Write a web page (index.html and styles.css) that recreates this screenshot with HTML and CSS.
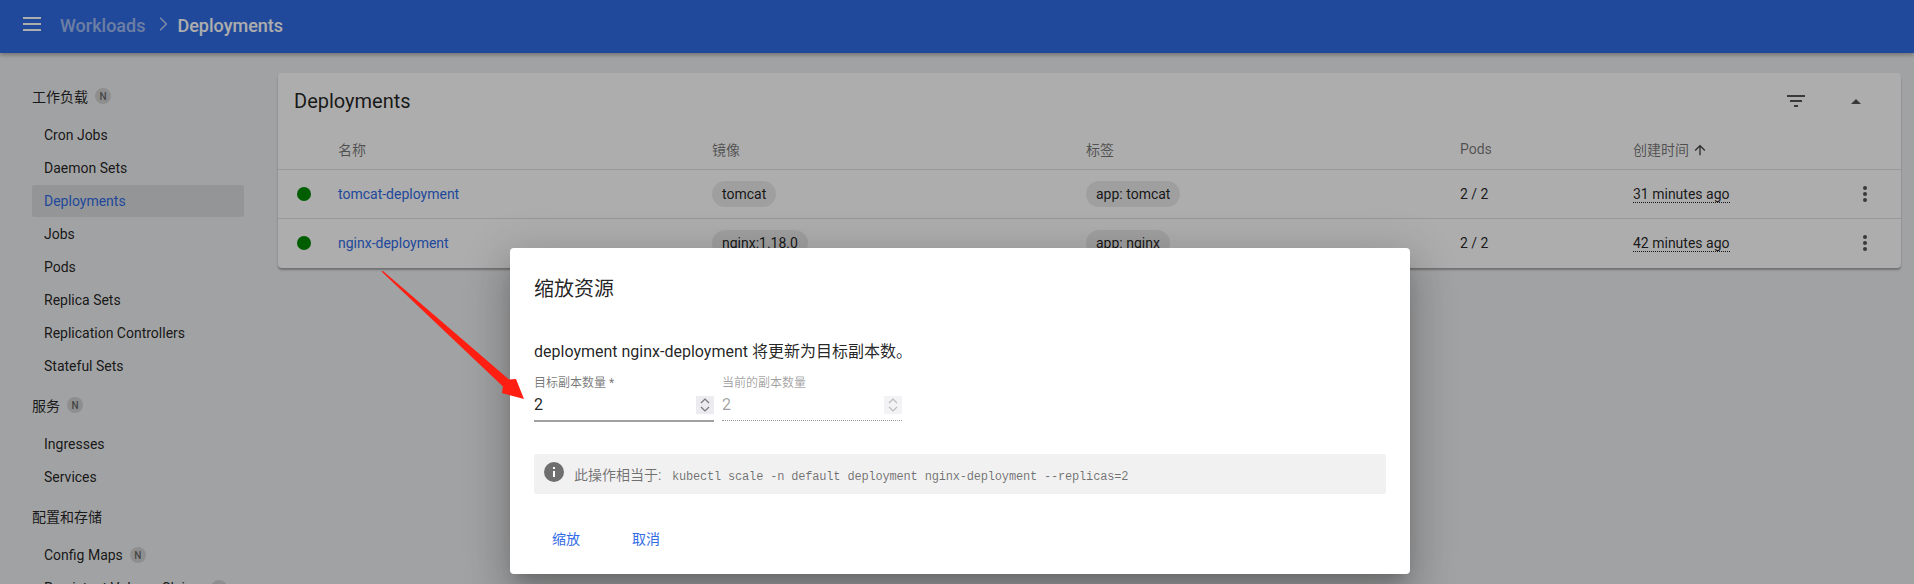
FILE: index.html
```html
<!DOCTYPE html>
<html lang="en">
<head>
    <meta charset="UTF-8">
    <title>Deployments</title>
    <link rel="stylesheet" href="styles.css">
</head>
<body>
    <header class="toolbar">
        <svg class="menu-icon" viewBox="0 0 18 14"><path d="M0 0h18v2H0zM0 6h18v2H0zM0 12h18v2H0z"/></svg>
        <span class="crumb">Workloads</span>
        <svg class="crumb-sep" viewBox="0 0 24 24"><path d="M8.6 3.4 10 2l10 10-10 10-1.4-1.4L17.2 12z"/></svg>
        <span class="crumb current">Deployments</span>
    </header>

    <div class="layout">
        <nav class="sidebar">
            <div class="nav-title">工作负载 <span class="badge">N</span></div>
            <a class="nav-item">Cron Jobs</a>
            <a class="nav-item">Daemon Sets</a>
            <a class="nav-item active">Deployments</a>
            <a class="nav-item">Jobs</a>
            <a class="nav-item">Pods</a>
            <a class="nav-item">Replica Sets</a>
            <a class="nav-item">Replication Controllers</a>
            <a class="nav-item">Stateful Sets</a>
            <div class="nav-title">服务 <span class="badge">N</span></div>
            <a class="nav-item">Ingresses</a>
            <a class="nav-item">Services</a>
            <div class="nav-title">配置和存储</div>
            <a class="nav-item">Config Maps <span class="badge">N</span></a>
            <a class="nav-item">Persistent Volume Claims <span class="badge">N</span></a>
        </nav>

        <main class="main">
            <section class="card">
                <div class="card-head">
                    <h2>Deployments</h2>
                    <svg class="filter-icon" viewBox="0 0 18 12"><path d="M0 0h18v2H0zM3 5h12v2H3zM7 10h4v2H7z"/></svg>
                    <svg class="collapse-icon" viewBox="0 0 10 5"><path d="M0 5 5 0l5 5z"/></svg>
                </div>
                <div class="row head">
                    <span></span>
                    <span>名称</span>
                    <span>镜像</span>
                    <span>标签</span>
                    <span>Pods</span>
                    <span>创建时间 <svg class="sort-icon" viewBox="0 0 24 24"><path d="M4 12l1.41 1.41L11 7.83V20h2V7.83l5.58 5.59L20 12l-8-8z"/></svg></span>
                    <span></span>
                </div>
                <div class="row">
                    <span class="dot"></span>
                    <a class="link">tomcat-deployment</a>
                    <span><span class="chip">tomcat</span></span>
                    <span><span class="chip">app: tomcat</span></span>
                    <span>2 / 2</span>
                    <span><span class="age">31 minutes ago</span></span>
                    <svg class="more-icon" viewBox="0 0 4 16"><circle cx="2" cy="2" r="2"/><circle cx="2" cy="8" r="2"/><circle cx="2" cy="14" r="2"/></svg>
                </div>
                <div class="row">
                    <span class="dot"></span>
                    <a class="link">nginx-deployment</a>
                    <span><span class="chip">nginx:1.18.0</span></span>
                    <span><span class="chip">app: nginx</span></span>
                    <span>2 / 2</span>
                    <span><span class="age">42 minutes ago</span></span>
                    <svg class="more-icon" viewBox="0 0 4 16"><circle cx="2" cy="2" r="2"/><circle cx="2" cy="8" r="2"/><circle cx="2" cy="14" r="2"/></svg>
                </div>
            </section>
        </main>
    </div>

    <div class="backdrop"></div>

    <div class="dialog">
        <h3>缩放资源</h3>
        <p class="dialog-text">deployment nginx-deployment 将更新为目标副本数。</p>
        <div class="fields">
            <div class="field">
                <label>目标副本数量 *</label>
                <div class="field-value">
                    <span>2</span>
                    <span class="spin"><svg viewBox="0 0 10 16"><path d="M1 6l4-4 4 4M1 10l4 4 4-4"/></svg></span>
                </div>
            </div>
            <div class="field disabled">
                <label>当前的副本数量</label>
                <div class="field-value">
                    <span>2</span>
                    <span class="spin"><svg viewBox="0 0 10 16"><path d="M1 6l4-4 4 4M1 10l4 4 4-4"/></svg></span>
                </div>
            </div>
        </div>
        <div class="info">
            <svg class="info-icon" viewBox="0 0 20 20"><circle cx="10" cy="10" r="10"/><path class="info-mark" d="M9 9h2v6H9zM9 5h2v2H9z"/></svg>
            <span>此操作相当于: <code>kubectl scale -n default deployment nginx-deployment --replicas=2</code></span>
        </div>
        <div class="actions">
            <a class="action">缩放</a>
            <a class="action">取消</a>
        </div>
    </div>

    <svg class="arrow" viewBox="0 0 1914 584"><polygon points="381.5,271.5 383,271 509,379.6 516,379 524,399 502,393 503,386.4"/></svg>
</body>
</html>
```

FILE: styles.css
```css
* { box-sizing: border-box; }
html, body { height: 584px; overflow: hidden; }
body { margin: 0; font-family: Roboto, "Noto Sans CJK SC", sans-serif; font-size: 14px; color: rgba(0, 0, 0, .87); background-color: #eeeff1; }

.toolbar { height: 53px; display: flex; align-items: center; padding: 0 0 2px 23px; background-color: #326ce5; color: white; box-shadow: 0 2px 4px rgba(0, 0, 0, .3); }
.menu-icon { width: 18px; height: 14px; fill: white; margin: 0 19px 3px 0; }
.crumb { font-size: 18px; font-weight: 500; color: rgba(255, 255, 255, .55); }
.crumb.current { color: white; }
.crumb-sep { width: 16px; height: 16px; margin: 0 7px 4px 9px; fill: rgba(255, 255, 255, .7); }

.layout { display: flex; }
.sidebar { width: 278px; flex: none; padding: 27px 34px 0 32px; }
.nav-title { height: 32px; margin: 0 0 7px; display: flex; align-items: center; gap: 7px; }
.nav-item { height: 32px; margin-bottom: 1px; padding-left: 12px; display: flex; align-items: center; gap: 7px; border-radius: 2px; }
.nav-item + .nav-title { margin-top: 7px; }
.nav-item.active { background-color: rgba(0, 0, 0, .08); color: #326ce5; }
.badge { width: 16px; height: 16px; border-radius: 50%; display: flex; align-items: center; justify-content: center; font-size: 10px; font-weight: 500; background-color: rgba(0, 0, 0, .12); color: rgba(0, 0, 0, .54); }

.main { flex: 1; padding: 20px 13px 0 0; }
.card { padding-bottom: 1px; background: white; border-radius: 4px; box-shadow: 0 2px 2px rgba(0, 0, 0, .3); }
.card-head { height: 56px; display: flex; align-items: center; padding-left: 16px; }
.card-head h2 { margin: 0 auto 0 0; font-size: 20px; font-weight: 400; }
.filter-icon { width: 18px; height: 12px; fill: #555; margin-right: 46px; }
.collapse-icon { width: 10px; height: 5px; fill: #555; margin-right: 40px; }

.row { display: grid; grid-template-columns: 60px 374px 374px 374px 173px 232px 1fr; align-items: center; height: 49px; border-top: 1px solid rgba(0, 0, 0, .12); }
.row.head { height: 40px; border-top: none; color: rgba(0, 0, 0, .54); font-size: 14px; }
.dot { width: 14px; height: 14px; margin-left: 19px; border-radius: 50%; background-color: #008a00; }
.link { color: #326ce5; }
.chip { display: inline-block; height: 26px; line-height: 26px; padding: 0 10px; border-radius: 13px; background-color: rgba(0, 0, 0, .08); }
.age { border-bottom: 1px dotted rgba(0, 0, 0, .87); }
.sort-icon { width: 16px; height: 16px; vertical-align: -3px; fill: #444; }
.more-icon { width: 4px; height: 16px; fill: #555; margin-left: -2px; }

.backdrop { position: absolute; inset: 0; background-color: rgba(0, 0, 0, .32); }

.dialog { position: absolute; left: 510px; top: 248px; width: 900px; height: 326px; padding: 26px 24px 0; background: white; border-radius: 4px; box-shadow: 0 11px 15px -7px rgba(0, 0, 0, .2), 0 24px 38px 3px rgba(0, 0, 0, .14), 0 9px 46px 8px rgba(0, 0, 0, .12); }
.dialog h3 { margin: 0; font-size: 20px; font-weight: 400; line-height: 30px; }
.dialog-text { margin: 36px 0 0; font-size: 16px; line-height: 24px; }

.fields { display: flex; gap: 8px; margin-top: 11px; }
.field { width: 180px; }
.field label { display: block; font-size: 12px; line-height: 16px; color: rgba(0, 0, 0, .54); }
.field-value { height: 31px; display: flex; justify-content: space-between; padding-top: 4px; font-size: 16px; line-height: 20px; border-bottom: 2px solid #a0a0a0; }
.spin { width: 18px; height: 18px; margin-top: 1px; display: flex; align-items: center; justify-content: center; background-color: #ebebf0; }
.spin svg { width: 10px; height: 16px; fill: none; stroke: #777; stroke-width: 1.2; }
.field.disabled label, .field.disabled .field-value { color: rgba(0, 0, 0, .38); }
.field.disabled .field-value { border-bottom: 1px dotted #999; height: 30px; }
.field.disabled .spin { background-color: #f3f3f6; }
.field.disabled .spin svg { stroke: #bbb; }

.info { height: 40px; margin-top: 32px; padding-left: 10px; display: flex; align-items: center; gap: 10px; background-color: #f1f1f1; border-radius: 2px; color: rgba(0, 0, 0, .54); font-size: 14px; }
.info code { margin-left: 7px; font-family: "Liberation Mono", monospace; font-size: 12px; letter-spacing: -.18px; }
.info-icon { width: 20px; height: 20px; margin-bottom: 4px; fill: #6f6f6f; }
.info-mark { fill: white; }

.actions { display: flex; gap: 52px; padding: 35px 0 0 18px; }
.action { color: #326ce5; font-size: 14px; line-height: 20px; }

.arrow { position: absolute; left: 0; top: 0; width: 1914px; height: 584px; pointer-events: none; }
.arrow polygon { fill: #ff1e12; }
```
